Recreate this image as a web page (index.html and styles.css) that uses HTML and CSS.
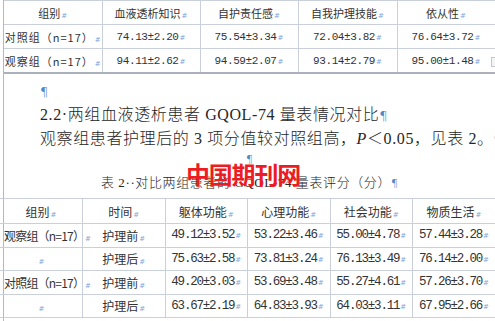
FILE: index.html
```html
<!DOCTYPE html>
<html lang="zh">
<head>
<meta charset="utf-8">
<link rel="stylesheet" href="styles.css">
</head>
<body>
<div class="page">
  <div class="handle"></div>
  <table class="t1">
    <colgroup><col class="c1"><col class="c2"><col class="c3"><col class="c4"><col class="c5"></colgroup>
    <tr><td>组别<span class="m">#</span></td><td>血液透析知识<span class="m">#</span></td><td>自护责任感<span class="m">#</span></td><td>自我护理技能<span class="m">#</span></td><td>依从性<span class="m">#</span></td></tr>
    <tr><td class="g1">对照组（n=17）<span class="m">#</span></td><td class="n">74.13±2.20<span class="m">#</span></td><td class="n">75.54±3.34<span class="m">#</span></td><td class="n">72.04±3.82<span class="m">#</span></td><td class="n">76.64±3.72<span class="m">#</span></td></tr>
    <tr><td class="g1">观察组（n=17）<span class="m">#</span></td><td class="n">94.11±2.62<span class="m">#</span></td><td class="n">94.59±2.07<span class="m">#</span></td><td class="n">93.14±2.79<span class="m">#</span></td><td class="n">95.00±1.48<span class="m">#</span></td></tr>
  </table>
  <div class="text">
    <p class="line"><span class="pm">¶</span></p>
    <p class="line wide">2.2·两组血液透析患者 GQOL-74 量表情况对比<span class="pm">¶</span></p>
    <p class="line wide">观察组患者护理后的 3 项分值较对照组高，<i>P</i>＜0.05，见表 2。<span class="pm">¶</span></p>
    <p class="line center empty"><span class="pm sm">¶</span></p>
    <p class="line caption">表 2··对比两组患者的 GQOL-74 量表评分（分）<span class="pm">¶</span></p>
    <div class="wm">中国期刊网</div>
  </div>
  <table class="t2">
    <colgroup><col><col><col><col><col><col></colgroup>
    <tr class="hd"><td>组别<span class="m">#</span></td><td>时间<span class="m">#</span></td><td>躯体功能<span class="m">#</span></td><td>心理功能<span class="m">#</span></td><td>社会功能<span class="m">#</span></td><td>物质生活<span class="m">#</span></td></tr>
    <tr><td class="g">观察组（n=17）<span class="m">#</span></td><td>护理前<span class="m">#</span></td><td class="n">49.12±3.52<span class="m">#</span></td><td class="n">53.22±3.46<span class="m">#</span></td><td class="n">55.00±4.78<span class="m">#</span></td><td class="n">57.44±3.28<span class="m">#</span></td></tr>
    <tr><td><span class="m">#</span></td><td>护理后<span class="m">#</span></td><td class="n">75.63±2.58<span class="m">#</span></td><td class="n">73.81±3.24<span class="m">#</span></td><td class="n">76.13±3.49<span class="m">#</span></td><td class="n">76.14±2.00<span class="m">#</span></td></tr>
    <tr><td class="g">对照组（n=17）<span class="m">#</span></td><td>护理前<span class="m">#</span></td><td class="n">49.20±3.03<span class="m">#</span></td><td class="n">53.69±3.48<span class="m">#</span></td><td class="n">55.27±4.61<span class="m">#</span></td><td class="n">57.26±3.70<span class="m">#</span></td></tr>
    <tr><td><span class="m">#</span></td><td>护理后<span class="m">#</span></td><td class="n">63.67±2.19<span class="m">#</span></td><td class="n">64.83±3.93<span class="m">#</span></td><td class="n">64.03±3.11<span class="m">#</span></td><td class="n">67.95±2.66<span class="m">#</span></td></tr>
  </table>
</div>
</body>
</html>
```
FILE: styles.css
```css
html, body {
  margin: 0;
  padding: 0;
  background: #fff;
}
body {
  width: 495px;
  height: 321px;
  overflow: hidden;
  font-family: "Liberation Serif", "Noto Sans CJK SC", serif;
  color: #2a2a2a;
}
.page {
  position: relative;
  margin-left: 3px;
  border-left: 1px solid #b3b8c1;
  min-height: 321px;
}
.handle {
  position: absolute;
  left: 487px;
  top: 57px;
  width: 5px;
  height: 8px;
  border: 1px solid #c4c8ce;
  background: #f4f4f4;
}
table {
  border-collapse: collapse;
  table-layout: fixed;
}
td {
  padding: 0;
  text-align: center;
  vertical-align: middle;
  white-space: nowrap;
  font-family: "Noto Sans CJK SC", sans-serif;
  font-weight: 400;
  color: #333;
}
.t1 {
  width: 491px;
  border-top: 1px solid #c9d0da;
  border-bottom: 2px solid #aab1bb;
}
.t1 td {
  height: 23px;
  border: 1px solid #c9d0da;
  font-size: 11px;
}
.t1 tr td:first-child { border-left: none; }
.t1 tr:last-child td { border-bottom: 2px solid #aab1bb; }
.t1 .c1 { width: 98px; }
.t1 .c2 { width: 98px; }
.t1 .c3 { width: 98px; }
.t1 .c4 { width: 99px; }
.t1 .c5 { width: 98px; }
.t1 td.g1 { letter-spacing: 1px; }
td.n {
  font-family: "Liberation Mono", monospace;
  font-weight: 400;
  letter-spacing: -0.4px;
}
.t1 td.n { font-size: 11px; }
.m {
  font-family: "DejaVu Sans", sans-serif;
  font-size: 7px;
  color: #7fa6da;
  letter-spacing: 0;
  margin-left: 1px;
}
.text {
  position: relative;
  padding: 5px 0 0 36px;
}
.line {
  margin: 0;
  height: 24px;
  line-height: 24px;
  font-size: 16px;
  white-space: nowrap;
  color: #262626;
  font-weight: 300;
}
.wide { letter-spacing: 0.6px; }
.line i { font-family: "Liberation Serif", serif; }
.pm {
  color: #4f87c7;
  font-family: "DejaVu Sans", sans-serif;
  font-size: 13px;
  letter-spacing: 0;
}
.center {
  text-align: center;
  margin-left: -36px;
}
.empty {
  height: 21px;
  line-height: 14px;
}
.sm { font-size: 11px; }
.caption {
  text-align: center;
  margin-left: -36px;
  font-size: 13px;
  height: 26px;
  line-height: 22px;
  letter-spacing: 0.6px;
}
.caption .pm { font-size: 11px; }
.wm {
  position: absolute;
  left: 182px;
  top: 87px;
  font-family: "Noto Sans CJK SC", sans-serif;
  font-weight: 700;
  font-size: 24px;
  line-height: 26px;
  color: #ec1c24;
  letter-spacing: -1.2px;
}
.t2 {
  margin-left: -4px;
  width: 495px;
  border-top: 1px solid #c9d0da;
  border-bottom: 1px solid #c9d0da;
}
.t2 td {
  height: 22.5px;
  border: 1px solid #c9d0da;
  font-size: 12px;
}
.t2 tr.hd td { height: 24px; }
.t2 tr td:first-child { border-left: none; }
.t2 tr td:last-child { border-right: none; }
.t2 td.n {
  font-size: 12.5px;
  letter-spacing: -1.2px;
}
.t2 td.g {
  text-align: left;
  padding-left: 4px;
  letter-spacing: -0.8px;
}
```
